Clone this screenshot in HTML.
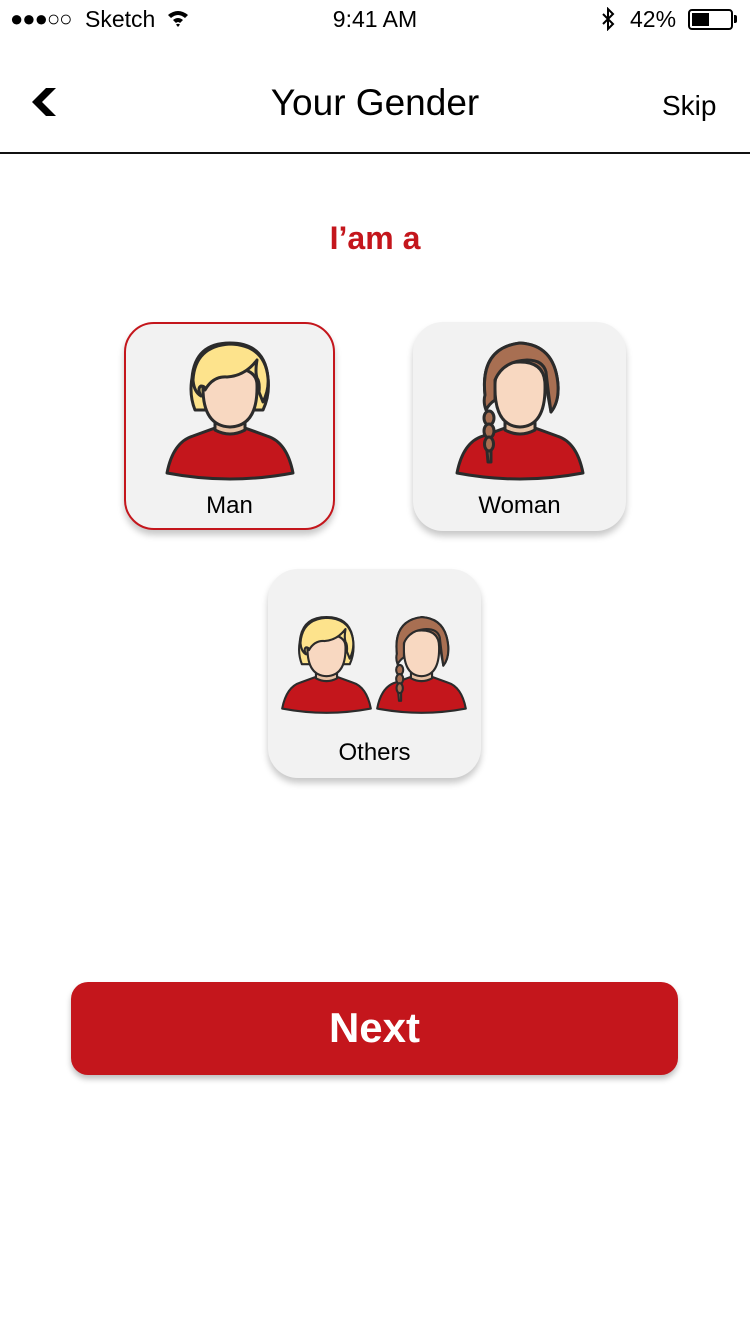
<!DOCTYPE html>
<html><head><meta charset="utf-8">
<style>
*{margin:0;padding:0;box-sizing:border-box}
body{width:750px;height:1334px;background:#fff;position:relative;overflow:hidden;font-family:"Liberation Sans",sans-serif;color:#000}
.abs{position:absolute}
.card{position:absolute;background:#f2f2f2;border-radius:30px;box-shadow:0 5px 7px rgba(0,0,0,.22)}
.lbl{position:absolute;left:0;right:0;text-align:center;font-size:24px}
</style></head><body>
<svg width="0" height="0" style="position:absolute">
<defs>
<g id="man" stroke="#2b2b2b" stroke-width="3" stroke-linejoin="round">
<path d="M2 133 Q8 102 28 96 L50 88 L80 88 L102 96 Q122 102 128 133 Q65 145 2 133 Z" fill="#c4161c"/>
<path d="M50 74 L50 90 Q65 98 80 90 L80 74 Z" fill="#e8c1a3"/>
<path d="M30 70 Q24 55 27 38 Q30 3 65 3 Q100 3 103 38 Q105 55 98 70 Z" fill="#fde38c"/>
<path d="M38 45 Q37 86 65 87 Q93 86 92 45 Q92 28 65 28 Q38 28 38 45Z" fill="#f8d8c1"/>
<path d="M36 56 Q32 48 36 46 Q40 46 40 50 Q48 36 62 37 Q80 36 92 20 Q90 32 92 38 Q95 42 94 52 L98 62 Q104 50 103 38 Q100 5 65 4 Q30 6 28 40 Q29 52 36 56Z" fill="#fde38c"/>
</g>
<g id="woman" stroke="#2b2b2b" stroke-width="3" stroke-linejoin="round">
<path d="M2 133 Q8 102 28 96 L50 88 L80 88 L102 96 Q122 102 128 133 Q65 145 2 133 Z" fill="#c4161c"/>
<path d="M50 74 L50 90 Q65 98 80 90 L80 74 Z" fill="#e8c1a3"/>
<path d="M30 55 Q25 8 65 3 Q100 5 103 45 Q104 62 96 72 L92 50 Z" fill="#a86f52"/>
<path d="M40 45 Q39 86 65 87 Q91 86 90 45 Q90 22 65 22 Q40 22 40 45Z" fill="#f8d8c1"/>
<path d="M30 55 Q25 8 65 3 Q100 5 103 45 Q104 62 96 72 Q93 50 91 32 Q88 20 72 20 Q48 21 40 40 L40 60 Q34 64 31 70 Q28 62 30 55 Z" fill="#a86f52"/>
<ellipse cx="34" cy="78" rx="5" ry="7" fill="#a86f52"/>
<ellipse cx="34" cy="91" rx="5" ry="7" fill="#a86f52"/>
<ellipse cx="34" cy="104" rx="4.5" ry="7" fill="#a86f52"/>
<path d="M32 111 L33 122 L36 122 L36 111 Z" fill="#a86f52"/>
</g>
</defs>
</svg>

<!-- status bar -->
<div class="abs" style="left:10px;top:6px;font-size:22px;letter-spacing:-1px">●●●○○</div>
<div class="abs" style="left:85px;top:6px;font-size:23px">Sketch</div>
<svg class="abs" style="left:167px;top:9px" width="22" height="18" viewBox="0 0 22 18"><path d="M1 6 Q11 -2 21 6 L18 9 Q11 3 4 9Z M6 11 Q11 7 16 11 L13 14 Q11 12 9 14Z M11 18 L9 15.5 Q11 14 13 15.5Z" fill="#000"/></svg>
<div class="abs" style="left:0;right:0;top:6px;text-align:center;font-size:23px">9:41 AM</div>
<svg class="abs" style="left:600px;top:7px" width="16" height="24" viewBox="0 0 16 24"><path d="M3 7 L13 17 L8 22 L8 2 L13 7 L3 17" fill="none" stroke="#000" stroke-width="2"/></svg>
<div class="abs" style="left:630px;top:6px;font-size:23px">42%</div>
<div class="abs" style="left:688px;top:9px;width:45px;height:21px;border:2px solid #000;border-radius:4px"><div style="position:absolute;left:2px;top:2px;width:17px;height:13px;background:#000"></div></div>
<div class="abs" style="left:734px;top:15px;width:3px;height:8px;background:#000;border-radius:0 2px 2px 0"></div>

<!-- header -->
<svg class="abs" style="left:28px;top:86px" width="32" height="32" viewBox="0 0 32 32"><path d="M18 2 L4 16 L18 30 L28 30 L14 16 L28 2 Z" fill="#000"/></svg>
<div class="abs" style="left:0;right:0;top:82px;text-align:center;font-size:37px">Your Gender</div>
<div class="abs" style="left:662px;top:90px;font-size:28px">Skip</div>
<div class="abs" style="left:0;top:152px;width:750px;height:2px;background:#111"></div>

<div class="abs" style="left:0;right:0;top:220px;text-align:center;font-size:32px;font-weight:bold;color:#c4161c">I’am a</div>

<div class="card" style="left:124px;top:322px;width:211px;height:208px;border:2.5px solid #c4161c">
<div class="lbl" style="top:168px">Man</div></div>
<svg class="abs" style="left:165px;top:340px" width="130" height="145" viewBox="0 0 130 145"><use href="#man"/></svg>

<div class="card" style="left:413px;top:322px;width:213px;height:209px">
<div class="lbl" style="top:170px">Woman</div></div>
<svg class="abs" style="left:455px;top:340px" width="130" height="145" viewBox="0 0 130 145"><use href="#woman"/></svg>

<div class="card" style="left:268px;top:569px;width:213px;height:209px">
<div class="lbl" style="top:170px">Others</div></div>
<svg class="abs" style="left:280px;top:615px" width="93" height="102" viewBox="0 0 130 145"><use href="#man"/></svg>
<svg class="abs" style="left:375px;top:615px" width="93" height="102" viewBox="0 0 130 145"><use href="#woman"/></svg>

<div class="abs" style="left:71px;top:982px;width:607px;height:93px;background:#c4161c;border-radius:17px;box-shadow:0 4px 6px rgba(0,0,0,.25);color:#fff;font-size:42px;font-weight:bold;text-align:center;line-height:91px">Next</div>
</body></html>
